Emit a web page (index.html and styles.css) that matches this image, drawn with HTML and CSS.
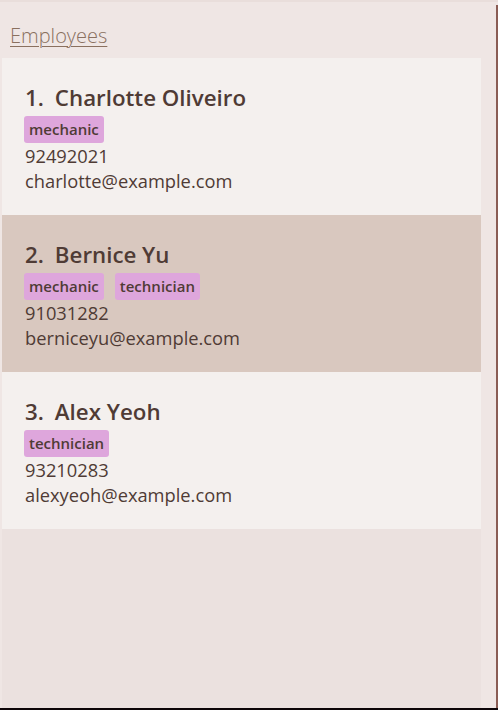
FILE: index.html
```html
<!DOCTYPE html>
<html>
<head>
<meta charset="utf-8">
<link rel="stylesheet" href="styles.css">
</head>
<body>
<div class="window">
  <div class="main">
    <div class="header"><span class="title">Employees</span></div>
    <div class="list">
      <div class="card light">
        <div class="name"><span class="num">1.</span>Charlotte Oliveiro</div>
        <div class="tags"><span class="tag">mechanic</span></div>
        <div class="line">92492021</div>
        <div class="line">charlotte@example.com</div>
      </div>
      <div class="card dark">
        <div class="name"><span class="num">2.</span>Bernice Yu</div>
        <div class="tags"><span class="tag">mechanic</span><span class="tag">technician</span></div>
        <div class="line">91031282</div>
        <div class="line">berniceyu@example.com</div>
      </div>
      <div class="card light">
        <div class="name"><span class="num">3.</span>Alex Yeoh</div>
        <div class="tags"><span class="tag">technician</span></div>
        <div class="line">93210283</div>
        <div class="line">alexyeoh@example.com</div>
      </div>
    </div>
  </div>
  <div class="edge"></div>
</div>
<div class="bottom"></div>
</body>
</html>
```
FILE: styles.css
```css
html, body {
  margin: 0;
  padding: 0;
}
body {
  width: 498px;
  height: 710px;
  background: #efe6e4;
  font-family: "Open Sans", "Noto Sans", sans-serif;
  color: #4f3b35;
  display: flex;
  flex-direction: column;
  overflow: hidden;
}
.window {
  flex: 1;
  display: flex;
  border-top: 2px solid #e9dedb;
}
.main {
  flex: 1;
  display: flex;
  flex-direction: column;
  padding-left: 2px;
  padding-right: 15px;
}
.header {
  height: 56px;
  box-sizing: border-box;
  padding: 22px 0 0 8px;
}
.title {
  font-weight: 300;
  font-size: 20px;
  line-height: 24px;
  color: #8a705f;
  text-decoration: underline;
  text-decoration-thickness: 1px;
  text-underline-offset: 3px;
}
.list {
  flex: 1;
  background: #ebe1df;
}
.card {
  height: 157px;
  box-sizing: border-box;
  padding: 25px 0 0 22px;
}
.light { background: #f4f0ee; }
.dark { background: #d9c8bf; }
.name {
  font-size: 22.3px;
  font-weight: 600;
  line-height: 30px;
  padding-left: 1px;
}
.num {
  margin-right: 11px;
}
.tags {
  display: flex;
  gap: 11px;
  margin-top: 3px;
}
.tag {
  background: #dea6dc;
  border-radius: 3px;
  font-size: 15px;
  font-weight: 600;
  line-height: 27px;
  padding: 0 5px;
}
.line {
  font-size: 18.3px;
  line-height: 25px;
  padding-left: 1px;
}
.edge {
  width: 2px;
  margin-top: 3px;
  background: #8a5c54;
}
.bottom {
  height: 2px;
  background: #0d0508;
}
```
